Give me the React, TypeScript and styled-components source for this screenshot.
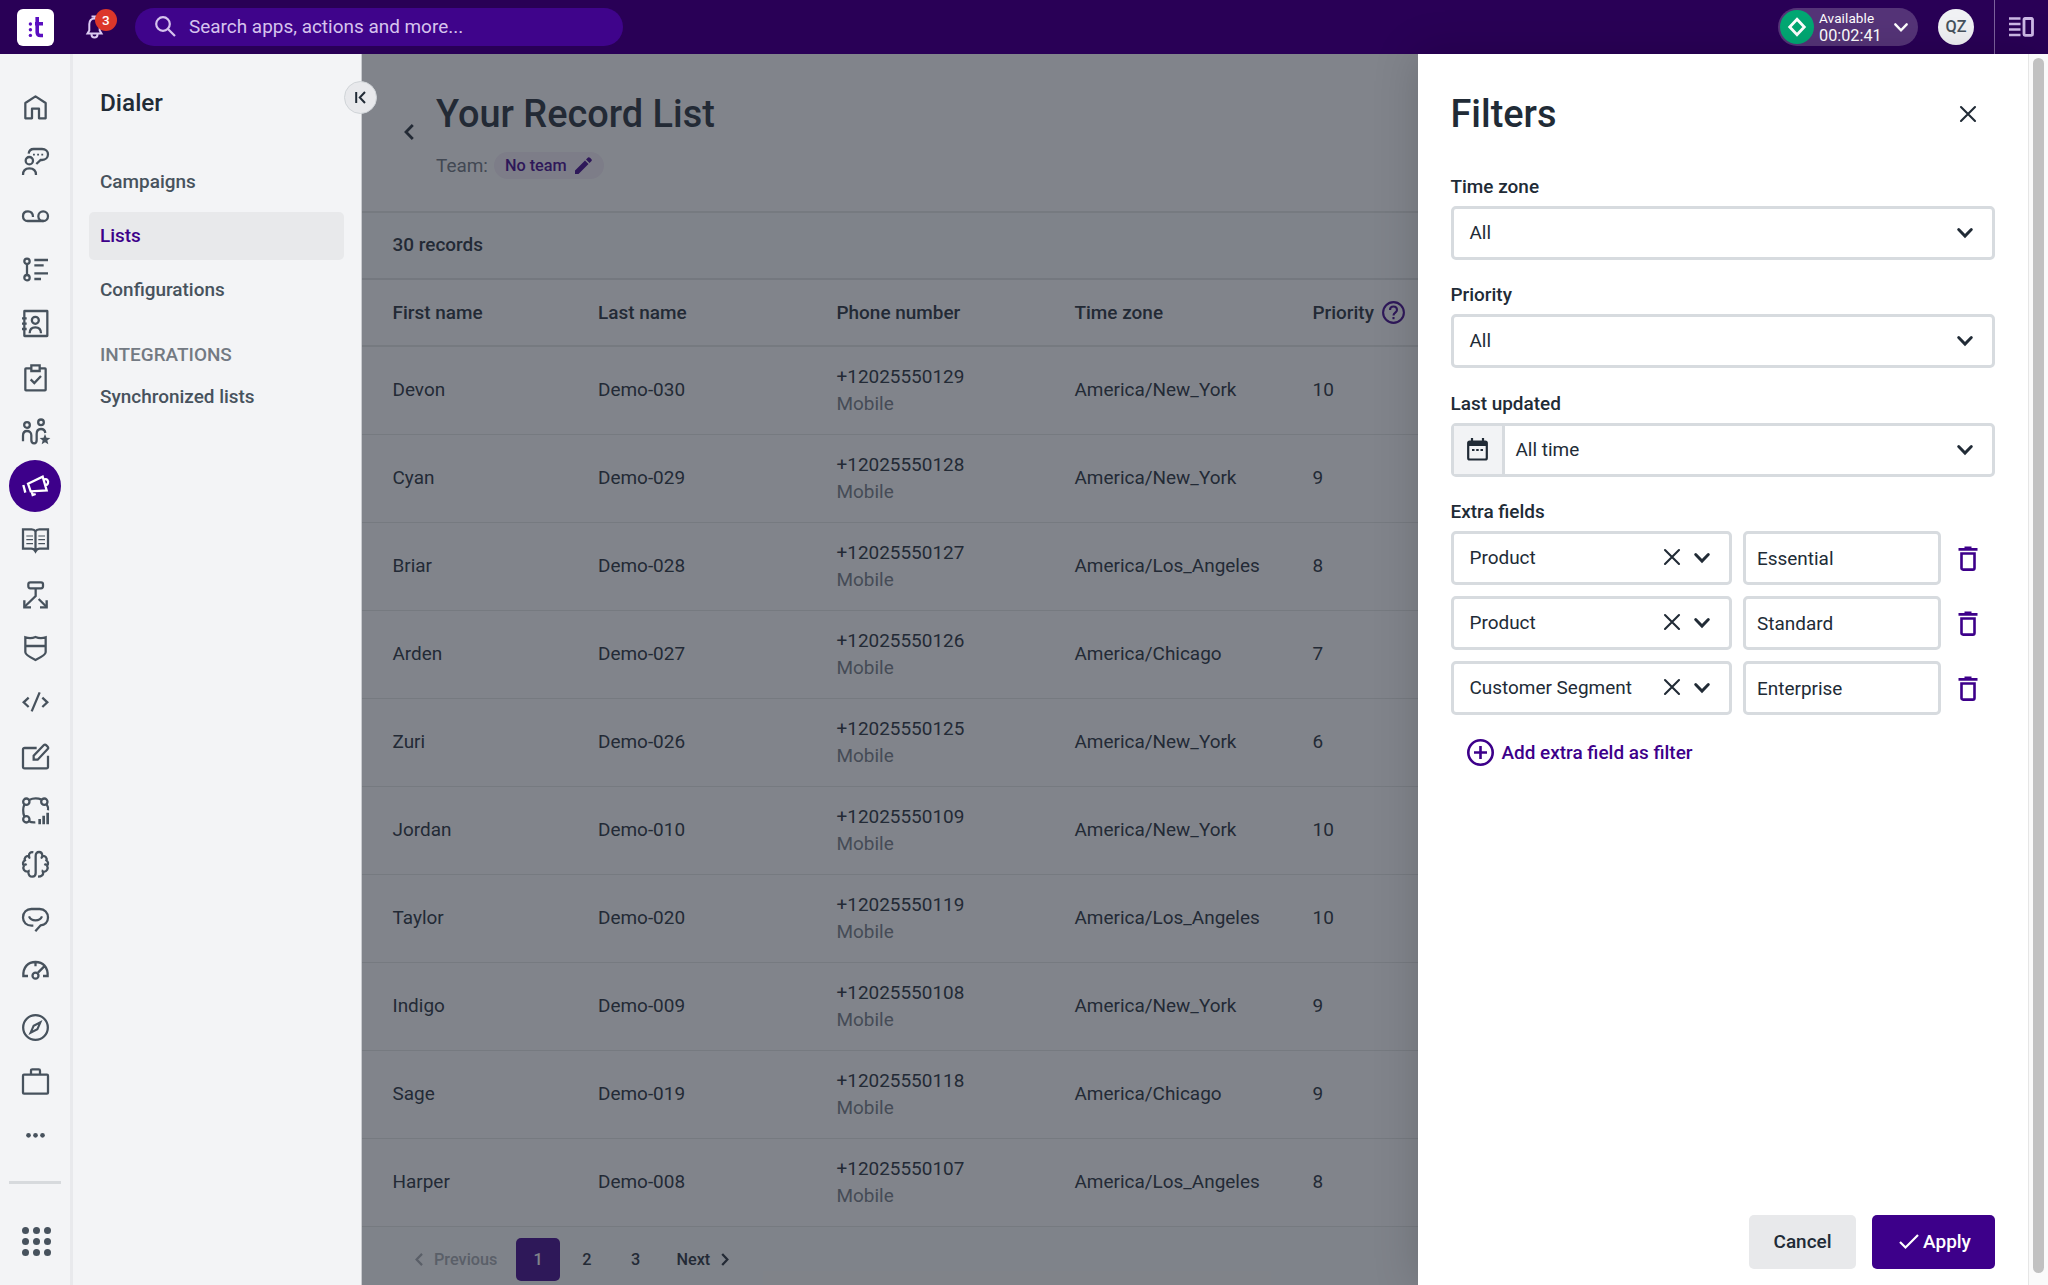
import React from "react";
import styled, { createGlobalStyle } from "styled-components";

const color = {
  ink: "#212b36",
  slate: "#47525d",
  muted: "#737a83",
  brand: "#3d008a",
  bar: "#290056",
  surface: "#f3f4f6",
  line: "#d7dbdf",
};

const GlobalStyle = createGlobalStyle`
  *, *::before, *::after { box-sizing: border-box; }
  html, body { margin: 0; padding: 0; }
  body { font-family: Roboto, "Liberation Sans", sans-serif; font-size: 18.96px; color: ${color.ink}; background: #fff; }
  button, input { font: inherit; color: inherit; margin: 0; }
  button { border: 0; background: none; padding: 0; cursor: pointer; }
  svg { display: block; flex: none; overflow: visible; }
`;

const Shell = styled.div`
  display: flex;
  flex-direction: column;
  width: 2048px;
  height: 1285px;
  overflow: hidden;
`;

/* ---------- Top bar ---------- */
const TopBar = styled.header`
  display: flex;
  align-items: center;
  height: 54px;
  flex: none;
  background: ${color.bar};
  padding-left: 17px;
`;
const Logo = styled.div`
  width: 37px;
  height: 37px;
  border-radius: 6px;
  background: #fff;
  display: grid;
  place-items: center;
`;
const BellButton = styled.button`
  position: relative;
  margin-left: 32px;
  width: 18px;
  height: 24px;
  color: #dccbf2;
`;
const Badge = styled.span`
  position: absolute;
  left: 9px;
  top: -6px;
  width: 21.5px;
  height: 22px;
  border-radius: 11px;
  background: #dc372a;
  color: #fff;
  font-size: 13.5px;
  font-weight: 500;
  line-height: 22px;
  text-align: center;
`;
const Search = styled.div`
  display: flex;
  align-items: center;
  gap: 13.5px;
  margin-left: 31px;
  padding: 0 0 1px 19.5px;
  width: 488px;
  height: 38px;
  border-radius: 19px;
  background: #3f048b;
  color: #d6c3ee;
`;
const TopRight = styled.div`
  display: flex;
  align-items: center;
  height: 100%;
  margin-left: auto;
`;
const Status = styled.button`
  display: flex;
  align-items: center;
  width: 140px;
  height: 38px;
  padding-left: 2px;
  border-radius: 19px;
  background: #553478;
  color: #fff;
`;
const StatusDot = styled.span`
  display: grid;
  place-items: center;
  width: 34px;
  height: 34px;
  border-radius: 50%;
  background: #02a873;
`;
const StatusText = styled.span`
  display: flex;
  flex-direction: column;
  width: 75px;
  margin-left: 5px;
  padding-bottom: 1px;
  text-align: left;
  font-size: 13.54px;
  letter-spacing: 0.1px;
  line-height: 17px;
  white-space: nowrap;
`;
const Timer = styled.span`
  font-size: 16.25px;
  letter-spacing: 0;
`;
const Avatar = styled.div`
  width: 36px;
  height: 36px;
  margin-left: 20px;
  border-radius: 50%;
  background: #f1f2f5;
  color: ${color.slate};
  font-size: 16.25px;
  font-weight: 500;
  line-height: 35px;
  text-align: center;
`;
const PanelToggle = styled.button`
  display: flex;
  align-items: center;
  height: 100%;
  width: 54px;
  margin-left: 20px;
  padding-left: 14px;
  border-left: 1px solid #7c619c;
`;

/* ---------- Body ---------- */
const Body = styled.div`
  display: flex;
  flex: 1;
  min-height: 0;
`;
const Rail = styled.nav`
  display: flex;
  flex-direction: column;
  align-items: center;
  width: 73px;
  flex: none;
  padding: 27px 0 0 0;
  border-right: 3px solid #e8e9ec;
  background: ${color.surface};
`;
const RailItem = styled.button<{ $active?: boolean }>`
  display: grid;
  place-items: center;
  width: 52px;
  height: 52px;
  margin-bottom: 2.15px;
  flex: none;
  border-radius: 50%;
  color: ${(p) => (p.$active ? "#fff" : color.slate)};
  background: ${(p) => (p.$active ? color.brand : "transparent")};
`;
const RailDivider = styled.hr`
  width: 52px;
  height: 3px;
  margin: 17px 0 43px;
  border: 0;
  background: #d7dadd;
`;
const AppGrid = styled.button`
  display: grid;
  grid-template-columns: repeat(3, 7.6px);
  gap: 3.3px;
  margin-left: 3px;
`;
const AppDot = styled.i`
  width: 7.6px;
  height: 7.6px;
  border-radius: 50%;
  background: ${color.slate};
`;

const SideNav = styled.aside`
  position: relative;
  z-index: 1;
  display: flex;
  flex-direction: column;
  width: 289px;
  flex: none;
  padding: 33px 17px 0 16px;
  border-right: 1px solid #c9cbcf;
  background: ${color.surface};
`;
const NavTitle = styled.h2`
  margin: 0 0 38.5px 11px;
  font-size: 24.3px;
  font-weight: 500;
  line-height: 32px;
`;
const NavLink = styled.a<{ $active?: boolean }>`
  display: flex;
  align-items: center;
  height: 48.5px;
  margin-bottom: 5.6px;
  padding-left: 11px;
  padding-bottom: 1px;
  flex: none;
  border-radius: 5px;
  font-weight: 500;
  color: ${(p) => (p.$active ? color.brand : color.slate)};
  background: ${(p) => (p.$active ? "#e8e9eb" : "transparent")};
`;
const NavSection = styled.div`
  margin: 21px 0 5px 11px;
  line-height: 27px;
  font-weight: 500;
  color: ${color.muted};
`;
const Collapse = styled.button`
  position: absolute;
  left: 271px;
  top: 27px;
  display: grid;
  place-items: center;
  width: 33px;
  height: 33px;
  border: 1.5px solid #d0d4d8;
  border-radius: 50%;
  background: #e8e9ec;
`;

const Stage = styled.div`
  position: relative;
  display: flex;
  flex: 1;
  min-width: 0;
`;
const Page = styled.main`
  display: flex;
  flex-direction: column;
  flex: 1;
  background: #fff;
`;
const PageHead = styled.div`
  display: flex;
  height: 159px;
  flex: none;
  padding: 37px 0 0 41.5px;
  border-bottom: 2px solid #e4e7e6;
`;
const BackButton = styled.button`
  display: flex;
  width: 32.5px;
  height: 16px;
  margin-top: 33px;
`;
const Heading = styled.h1`
  margin: 0 0 14.5px;
  font-size: 37.9px;
  font-weight: 500;
  line-height: 46px;
`;
const TeamLine = styled.div`
  display: flex;
  align-items: center;
  height: 27px;
  color: #6a727b;
`;
const TeamPill = styled.button`
  display: flex;
  align-items: center;
  gap: 8px;
  height: 27px;
  width: 110px;
  margin-left: 6px;
  padding-left: 11px;
  border-radius: 14px;
  background: #f5eef8;
  color: ${color.brand};
  font-size: 16.25px;
  font-weight: 500;
  white-space: nowrap;
`;
const CountBar = styled.div`
  display: flex;
  align-items: center;
  height: 67px;
  flex: none;
  padding: 0 0 3px 30.5px;
  border-bottom: 2px solid #e0e3e3;
  background: #fbfcfc;
  font-weight: 500;
`;
const Row = styled.div<{ $head?: boolean }>`
  display: grid;
  grid-template-columns: 205.5px 238.5px 238px 238px 1fr;
  align-items: center;
  height: ${(p) => (p.$head ? 67 : 88)}px;
  flex: none;
  padding-left: 30.5px;
  padding-bottom: ${(p) => (p.$head ? 0 : 2)}px;
  border-bottom: ${(p) => (p.$head ? 2 : 1.5)}px solid #e4e7e6;
  font-weight: ${(p) => (p.$head ? 500 : 400)};
`;
const Cell = styled.div`
  display: flex;
  align-items: center;
  gap: 8px;
  line-height: 27px;
`;
const Phone = styled.div`
  line-height: 27px;
`;
const PhoneKind = styled.div`
  color: ${color.muted};
`;
const Pagination = styled.div`
  display: flex;
  align-items: center;
  flex: 1;
  padding: 7px 0 0 53px;
  background: #fbfcfc;
  font-size: 16.25px;
  font-weight: 500;
`;
const PageStep = styled.button<{ $disabled?: boolean }>`
  display: flex;
  align-items: center;
  gap: 11px;
  height: 43px;
  margin-right: 19px;
  color: ${(p) => (p.$disabled ? "#a3a8ad" : color.ink)};
  font-weight: 500;
`;
const PageNumber = styled.button<{ $active?: boolean }>`
  width: 43.5px;
  height: 43.5px;
  margin-right: 5.2px;
  border-radius: 5px;
  font-weight: 500;
  color: ${(p) => (p.$active ? "#fff" : color.ink)};
  background: ${(p) => (p.$active ? color.brand : "transparent")};
`;
const NextLabel = styled.span`
  margin-left: 14px;
`;
const Scrim = styled.div`
  position: absolute;
  inset: 0;
  background: rgba(37, 42, 53, 0.575);
`;

/* ---------- Drawer ---------- */
const Drawer = styled.section`
  position: absolute;
  top: 0;
  bottom: 0;
  right: 0;
  width: 630px;
  display: flex;
  background: #fff;
  box-shadow: 0 0 42px rgba(0, 0, 0, 0.17);
`;
const DrawerBody = styled.div`
  display: flex;
  flex-direction: column;
  flex: 1;
  padding: 37px 33px 16px 32.5px;
`;
const DrawerHead = styled.div`
  display: flex;
  align-items: center;
  justify-content: space-between;
  height: 46px;
  margin-bottom: 36px;
  padding-right: 19px;
`;
const DrawerTitle = styled.h2`
  margin: 0;
  font-size: 37.9px;
  font-weight: 500;
  line-height: 46px;
`;
const Field = styled.div`
  height: 108.35px;
  flex: none;
`;
const Label = styled.label`
  display: block;
  height: 33px;
  line-height: 27px;
  font-weight: 500;
`;
const Select = styled.div<{ $w?: number }>`
  display: flex;
  align-items: center;
  width: ${(p) => (p.$w ? `${p.$w}px` : "100%")};
  height: 54px;
  flex: none;
  border: 3px solid ${color.line};
  border-radius: 5px;
  padding-right: 19px;
  background: #fff;
`;
const SelectValue = styled.span`
  flex: 1;
  padding: 0 0 1px 16px;
`;
const DateValue = styled(SelectValue)`
  padding: 0 0 0 11px;
`;
const AddOn = styled.span`
  display: grid;
  place-items: center;
  width: 51px;
  height: 100%;
  border-right: 3px solid ${color.line};
  background: #f2f3f5;
`;
const SelectActions = styled.span`
  display: flex;
  align-items: center;
  gap: 14px;
`;
const ClearSlot = styled.span`
  padding-bottom: 2px;
`;
const ExtraRow = styled.div`
  display: flex;
  align-items: center;
  margin-bottom: 11px;
  flex: none;
`;
const TextInput = styled.input`
  width: 198px;
  height: 54px;
  margin: 0 17px 0 11.5px;
  padding: 0 11px;
  border: 3px solid ${color.line};
  border-radius: 5px;
  background: #fff;
  outline: 0;
`;
const AddButton = styled.button`
  display: flex;
  align-items: center;
  gap: 8px;
  align-self: flex-start;
  height: 28px;
  margin: 12.5px 0 0 16px;
  color: ${color.brand};
  font-weight: 500;
`;
const Footer = styled.div`
  display: flex;
  justify-content: flex-end;
  gap: 16px;
  margin-top: auto;
`;
const Button = styled.button<{ $primary?: boolean }>`
  display: flex;
  align-items: center;
  justify-content: center;
  gap: 4px;
  width: ${(p) => (p.$primary ? 123 : 107)}px;
  height: 54px;
  padding: 0 0 1px ${(p) => (p.$primary ? 3 : 0)}px;
  border-radius: 5px;
  font-weight: 500;
  color: ${(p) => (p.$primary ? "#fff" : color.ink)};
  background: ${(p) => (p.$primary ? color.brand : "#e8e9eb")};
`;
const ScrollTrack = styled.div`
  width: 20px;
  padding: 4px 0 0 4px;
  border-left: 1px solid #e6e6e6;
  background: #fafafa;
`;
const ScrollThumb = styled.div`
  width: 11px;
  height: 1215px;
  border-radius: 6px;
  background: #c1c1c1;
`;

/* ---------- Icons ---------- */
const RailIcon = ({ children }: { children: React.ReactNode }) => (
  <svg width="27" height="27" viewBox="0 0 81 81" fill="none" stroke="currentColor" strokeWidth="6.8">
    {children}
  </svg>
);

const Chevron = ({ w = 14, h = 9, stroke = 2.6 }: { w?: number; h?: number; stroke?: number }) => (
  <svg width={w} height={h} viewBox="0 0 14 9" fill="none" stroke="currentColor" strokeWidth={stroke} strokeLinecap="round">
    <path d="M1.3 1.3 7 7.3l5.7-6" />
  </svg>
);

const SideChevron = ({ flip, w = 10, h = 16 }: { flip?: boolean; w?: number; h?: number }) => (
  <svg width={w} height={h} viewBox="0 0 10 16" fill="none" stroke="currentColor" strokeWidth="2.8">
    <path d={flip ? "M1.5 1 8 8l-6.5 7" : "M8.8 1 2 8l6.8 7"} />
  </svg>
);

const Cross = () => (
  <svg width="16" height="16" viewBox="0 0 16 16" stroke="currentColor" strokeWidth="2.1" strokeLinecap="round">
    <path d="M1 1l14 14M15 1 1 15" />
  </svg>
);

const Trash = () => (
  <svg width="20" height="26" viewBox="0 -1 20 26" fill="none" stroke={color.brand}>
    <path strokeWidth="2.6" d="M3.5 7.5h13V22q0 1.600-1.600 1.600H5.100q-1.600 0-1.600-1.600z" />
    <path strokeWidth="2.8" d="M.5 3.400h19M6.500 1.900h7" />
  </svg>
);

const railIcons: { name: string; active?: boolean; art: React.ReactNode }[] = [
  { name: "Home", art: <path strokeLinejoin="round" d="M10 27 40.500 7 71 27V73H51V44H30V73H10Z" /> },
  {
    name: "Conversations",
    art: (
      <>
        <circle cx="22" cy="38" r="11" />
        <path d="M3 81C3 67 11 61 22 61s20 6 20 20M20 17C21 8 27 3 35 3h25c11 0 18 7 18 16s-7 17-18 17h-4L43 48" />
        <path strokeWidth="5.500" d="M33 20h5.500M45.500 20H51M58 20h5.500" />
      </>
    ),
  },
  {
    name: "Voicemail",
    art: (
      <>
        <path d="M33 45C33 33 26 28 18 28 8 28 3 34 3 42.500S9 57 17 57h47" />
        <circle cx="63.500" cy="42.500" r="14.500" />
      </>
    ),
  },
  {
    name: "Activities",
    art: (
      <>
        <circle cx="15" cy="16" r="8" />
        <circle cx="15" cy="65" r="8" />
        <path d="M15 24v33M37 12h41M37 28h28M37 52h41M37 69h20" />
      </>
    ),
  },
  {
    name: "Contacts",
    art: (
      <>
        <rect x="7" y="3" width="69" height="75" rx="1" />
        <path d="M0 25h14M0 41h14M0 57h14M23 70c0-12 7-18 17-18s17 6 17 18" />
        <circle cx="40" cy="31" r="10.500" />
      </>
    ),
  },
  {
    name: "Tasks",
    art: (
      <>
        <rect x="10" y="13" width="61" height="66" rx="2" />
        <path fill={color.surface} d="M28 4h25v17H28z" />
        <path strokeWidth="7" d="m26 46 11 11 20-21" />
      </>
    ),
  },
  {
    name: "Teams",
    art: (
      <>
        <circle cx="15" cy="21" r="8.500" />
        <circle cx="57" cy="13" r="8.500" />
        <path d="M3 70V53c0-9 5-14 12-14s13 5 13 13v14c0 7 4 10 8.500 10S44 72 44 66V48c0-10 5-15 13-15s12 4 13 12" />
        <path fill="currentColor" stroke="none" d="m69 48 4.500 11.500L85 60l-9 7.500L79 79l-10-6.500L59 79l3-11.500-9-7.500 11.500-.5z" />
      </>
    ),
  },
  {
    name: "Dialer",
    active: true,
    art: (
      <>
        <path strokeWidth="7" d="m4 39 6 23" />
        <path d="m18 35 44-21 12 41-48 3zM29 59l3 10 9-3M67 22c8-3 13 4 11 11-1 4-4 6-7 6" />
      </>
    ),
  },
  {
    name: "Knowledge",
    art: (
      <>
        <path d="M3 7h26q8 0 11.500 6Q44 7 52 7h26v58H53q-8 0-12.500 8Q36 65 28 65H3zM40.500 13v57" />
        <path strokeWidth="3.500" d="M13 27h20M13 38h20M13 50h20M49 27h20M49 38h20M49 50h20" />
      </>
    ),
  },
  {
    name: "Routing",
    art: (
      <>
        <rect x="19" y="4" width="44" height="18" rx="6" />
        <path d="M41 23v22L7 78M50 54l24 24" />
        <path strokeWidth="7" d="M7 58v21h20M74 58v21H54" />
      </>
    ),
  },
  { name: "Security", art: <path d="M10 7q16 5 30.500-1Q55 12 71 7v45q0 8-30.500 23Q10 60 10 52zM10 33h61" /> },
  { name: "Developers", art: <path d="M20 26 5 40l15 14M61 26l15 14-15 14M53 10 29 67" /> },
  {
    name: "Notes",
    art: <path d="M44 15H8q-5 0-5 4v53q0 4 5 4h65q5 0 5-4V38M35 50V38L65 7q4-4 8 0l4 4q3 4 0 7L47 50z" />,
  },
  {
    name: "Journeys",
    art: (
      <>
        <circle cx="13" cy="14" r="9.500" />
        <circle cx="67" cy="14" r="9.500" />
        <circle cx="13" cy="67" r="9.500" />
        <path d="M21 9q19-9 38-1M7 22q-7 18 0 37M74 22q6 9 4 18M20 72q8 5 20 4" />
        <path strokeWidth="8" d="M53 66v16M65 56v26M77 47v35" />
      </>
    ),
  },
  {
    name: "Intelligence",
    art: (
      <path d="M34 4c-8-2-14 3-13 11-10-1-15 6-12 13-7 4-8 12-3 16-5 8 0 19 13 18 0 9 5 15 12 15 6 0 10-4 10-11V15c0-8 4-12 10-12s10 5 10 12c10-1 15 6 12 13 6 4 7 12 2 16 5 8 0 19-11 19 0 9-6 14-16 14M20 14q0 6 5 7M3 41q6 1 11-2M19 65q0-6 4-7M61 14q0 6-5 7M78 41q-6 1-11-2M63 65q0-6-4-7" />
    ),
  },
  {
    name: "Feedback",
    art: <path d="M34 59h-5C14 59 3 50 3 34.500S14 9 28 9h25c15 0 25 11 25 25.500S68 57 56 58L40 76M21 31q5 12 19.500 12T60 31" />,
  },
  {
    name: "Performance",
    art: (
      <>
        <path d="M18 48H4C3 21 18 6 40.500 6S78 21 77 48H63M40.500 6v13M48 38l18-18" />
        <circle cx="40.500" cy="47" r="9" />
      </>
    ),
  },
  {
    name: "Explore",
    art: (
      <>
        <circle cx="40.500" cy="40.500" r="37" />
        <path strokeWidth="6.500" d="M55 25 46 46 26 56 35 35z" />
      </>
    ),
  },
  {
    name: "Business",
    art: (
      <>
        <rect x="3" y="20" width="75" height="57" rx="3" />
        <path d="M27 20V8q0-4 4-4h19q4 0 4 4v12" />
      </>
    ),
  },
  {
    name: "More",
    art: (
      <g fill="currentColor" stroke="none">
        <circle cx="19.500" cy="40" r="7" />
        <circle cx="40.500" cy="40" r="7" />
        <circle cx="61.500" cy="40" r="7" />
      </g>
    ),
  },
];

/* ---------- Data ---------- */
const NY = "America/New_York";
const LA = "America/Los_Angeles";
const CHI = "America/Chicago";
const records: [string, string, string, string, number][] = [
  ["Devon", "Demo-030", "+12025550129", NY, 10],
  ["Cyan", "Demo-029", "+12025550128", NY, 9],
  ["Briar", "Demo-028", "+12025550127", LA, 8],
  ["Arden", "Demo-027", "+12025550126", CHI, 7],
  ["Zuri", "Demo-026", "+12025550125", NY, 6],
  ["Jordan", "Demo-010", "+12025550109", NY, 10],
  ["Taylor", "Demo-020", "+12025550119", LA, 10],
  ["Indigo", "Demo-009", "+12025550108", NY, 9],
  ["Sage", "Demo-019", "+12025550118", CHI, 9],
  ["Harper", "Demo-008", "+12025550107", LA, 8],
];
const extraFields = [
  ["Product", "Essential"],
  ["Product", "Standard"],
  ["Customer Segment", "Enterprise"],
];

export default function App() {
  return (
    <>
      <GlobalStyle />
      <Shell>
        <TopBar>
          <Logo>
            <svg width="16" height="21" viewBox="0 0 16 21" fill="none" stroke="#5a0fc0">
              <path strokeWidth="3.600" d="M9.200 0v15.200q0 3.300 3.300 3.300H15M7 6.800h8" />
              <g fill="#5a0fc0" stroke="none">
                <circle cx="2.400" cy="7" r="1.700" />
                <circle cx="2.400" cy="12.700" r="1.700" />
                <circle cx="2.400" cy="18.400" r="1.700" />
              </g>
            </svg>
          </Logo>
          <BellButton>
            <svg width="18" height="24" viewBox="0 0 18 24" fill="none" stroke="currentColor" strokeWidth="2">
              <path d="M1.500 18.500h14l-1.800-3V9c0-3.500-2-5.500-5.200-5.500S3.300 5.500 3.300 9v6.500zM5.500 1.500h5M5.500 19.500c0 4 6 4 6 0" />
            </svg>
            <Badge>3</Badge>
          </BellButton>
          <Search>
            <svg width="21" height="21" viewBox="0 0 21 21" fill="none" stroke="currentColor" strokeWidth="2.200">
              <circle cx="8" cy="8" r="6.800" />
              <path d="m13 13 7 7" />
            </svg>
            Search apps, actions and more...
          </Search>
          <TopRight>
            <Status>
              <StatusDot>
                <svg width="20" height="20" viewBox="0 0 20 20" fill="none" stroke="#fff" strokeWidth="2.800">
                  <path d="m10 2.200 7.300 7.800-7.300 7.800L2.700 10z" />
                </svg>
              </StatusDot>
              <StatusText>
                Available
                <Timer>00:02:41</Timer>
              </StatusText>
              <Chevron stroke={2.4} />
            </Status>
            <Avatar>QZ</Avatar>
            <PanelToggle>
              <svg width="25" height="20" viewBox="0 0 25 20" fill="none" stroke="#cdb9e6" strokeWidth="2.500">
                <path d="M0 1.500h11.500M0 7h11.500M0 12.500h11.500M0 18h11.500" />
                <rect x="15" y="1.500" width="8.500" height="16.800" rx="1" strokeWidth="2.800" />
              </svg>
            </PanelToggle>
          </TopRight>
        </TopBar>

        <Body>
          <Rail>
            {railIcons.map((icon) => (
              <RailItem key={icon.name} $active={icon.active} aria-label={icon.name}>
                <RailIcon>{icon.art}</RailIcon>
              </RailItem>
            ))}
            <RailDivider />
            <AppGrid>
              {Array.from({ length: 9 }, (_, i) => (
                <AppDot key={i} />
              ))}
            </AppGrid>
          </Rail>

          <SideNav>
            <NavTitle>Dialer</NavTitle>
            <NavLink>Campaigns</NavLink>
            <NavLink $active>Lists</NavLink>
            <NavLink>Configurations</NavLink>
            <NavSection>INTEGRATIONS</NavSection>
            <NavLink>Synchronized lists</NavLink>
            <Collapse>
              <svg width="12" height="13" viewBox="0 0 12 13" fill="none" stroke={color.ink} strokeWidth="2">
                <path d="M1.200 1v11M10 1 4.800 6.500 10 12" />
              </svg>
            </Collapse>
          </SideNav>

          <Stage>
            <Page>
              <PageHead>
                <BackButton>
                  <SideChevron />
                </BackButton>
                <div>
                  <Heading>Your Record List</Heading>
                  <TeamLine>
                    Team:
                    <TeamPill>
                      No team
                      <svg width="17" height="17" viewBox="0 0 17 17" fill="currentColor">
                        <path d="M0 17v-3.500L10 3.500 13.500 7l-10 10zM11 2.500l2-2q1-.8 2 .2l1.500 1.500q.8.900 0 1.800l-2 2z" />
                      </svg>
                    </TeamPill>
                  </TeamLine>
                </div>
              </PageHead>
              <CountBar>30 records</CountBar>
              <Row $head>
                <Cell>First name</Cell>
                <Cell>Last name</Cell>
                <Cell>Phone number</Cell>
                <Cell>Time zone</Cell>
                <Cell>
                  Priority
                  <svg width="23" height="23" viewBox="0 0 23 23" fill="none" stroke={color.brand} strokeWidth="2.100">
                    <circle cx="11.500" cy="11.500" r="10.400" />
                    <path d="M8 9c0-4.700 7-4.700 7 0 0 2.600-3.500 2.700-3.500 5.400M11.500 16v2.200" />
                  </svg>
                </Cell>
              </Row>
              {records.map(([first, last, phone, zone, priority]) => (
                <Row key={last}>
                  <Cell>{first}</Cell>
                  <Cell>{last}</Cell>
                  <Phone>
                    {phone}
                    <PhoneKind>Mobile</PhoneKind>
                  </Phone>
                  <Cell>{zone}</Cell>
                  <Cell>{priority}</Cell>
                </Row>
              ))}
              <Pagination>
                <PageStep $disabled>
                  <SideChevron w={8} h={13} />
                  Previous
                </PageStep>
                <PageNumber $active>1</PageNumber>
                <PageNumber>2</PageNumber>
                <PageNumber>3</PageNumber>
                <PageStep>
                  <NextLabel>Next</NextLabel>
                  <SideChevron flip w={8} h={13} />
                </PageStep>
              </Pagination>
            </Page>
            <Scrim />

            <Drawer>
              <DrawerBody>
                <DrawerHead>
                  <DrawerTitle>Filters</DrawerTitle>
                  <Cross />
                </DrawerHead>
                <Field>
                  <Label>Time zone</Label>
                  <Select>
                    <SelectValue>All</SelectValue>
                    <Chevron w={16} h={10} />
                  </Select>
                </Field>
                <Field>
                  <Label>Priority</Label>
                  <Select>
                    <SelectValue>All</SelectValue>
                    <Chevron w={16} h={10} />
                  </Select>
                </Field>
                <Field>
                  <Label>Last updated</Label>
                  <Select>
                    <AddOn>
                      <svg width="21" height="23" viewBox="0 0 21 23" fill="none" stroke={color.ink} strokeWidth="2.200">
                        <rect x="1.200" y="3.500" width="18.600" height="18" rx="1.500" />
                        <path strokeWidth="5" d="M1.200 5.500h18.600" />
                        <path d="M5 0v4M16 0v4M5 12h2.500M9.200 12h2.500M13.500 12H16" />
                      </svg>
                    </AddOn>
                    <DateValue>All time</DateValue>
                    <Chevron w={16} h={10} />
                  </Select>
                </Field>
                <Label>Extra fields</Label>
                {extraFields.map(([name, value]) => (
                  <ExtraRow key={value}>
                    <Select $w={281}>
                      <SelectValue>{name}</SelectValue>
                      <SelectActions>
                        <ClearSlot>
                          <Cross />
                        </ClearSlot>
                        <Chevron w={16} h={10} />
                      </SelectActions>
                    </Select>
                    <TextInput defaultValue={value} />
                    <Trash />
                  </ExtraRow>
                ))}
                <AddButton>
                  <svg width="27" height="27" viewBox="0 0 27 27" fill="none" stroke="currentColor" strokeWidth="2.600">
                    <circle cx="13.500" cy="13.500" r="12.200" />
                    <path d="M13.500 7v13M7 13.500h13" />
                  </svg>
                  Add extra field as filter
                </AddButton>
                <Footer>
                  <Button>Cancel</Button>
                  <Button $primary>
                    <svg width="20" height="15" viewBox="0 0 20 15" fill="none" stroke="currentColor" strokeWidth="2.200">
                      <path d="m1 8 5.500 5.500L19 1" />
                    </svg>
                    Apply
                  </Button>
                </Footer>
              </DrawerBody>
              <ScrollTrack>
                <ScrollThumb />
              </ScrollTrack>
            </Drawer>
          </Stage>
        </Body>
      </Shell>
    </>
  );
}
